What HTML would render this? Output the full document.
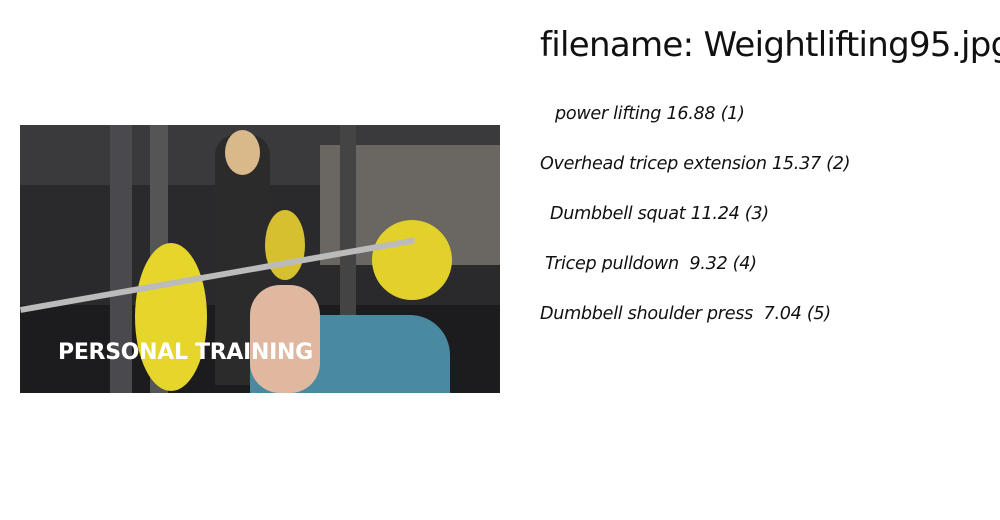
<!DOCTYPE html>
<html><head><style>
body{margin:0;width:1000px;height:520px;background:#fff;overflow:hidden;position:relative;font-family:"DejaVu Sans","Liberation Sans",sans-serif}
.t{position:absolute;left:540px;top:25px;font-size:34px;color:#111;white-space:nowrap;letter-spacing:-0.7px}
.i{position:absolute;font-style:italic;font-size:17.6px;color:#111;white-space:nowrap;letter-spacing:-0.3px}
.p{position:absolute;left:20px;top:125px;width:480px;height:268px;background:#2a2a2c;overflow:hidden}
.p div{position:absolute}
</style></head><body>
<div class="t">filename: Weightlifting95.jpg</div>
<div class="i" style="left:555px;top:104px">power lifting 16.88 (1)</div>
<div class="i" style="left:540px;top:154px">Overhead tricep extension 15.37 (2)</div>
<div class="i" style="left:550px;top:204px">Dumbbell squat 11.24 (3)</div>
<div class="i" style="left:545px;top:254px">Tricep pulldown&nbsp; 9.32 (4)</div>
<div class="i" style="left:540px;top:304px">Dumbbell shoulder press&nbsp; 7.04 (5)</div>
<div class="p">
<div style="left:0;top:0;width:480px;height:60px;background:#3a3a3c"></div>
<div style="left:300px;top:20px;width:180px;height:120px;background:#6a6662"></div>
<div style="left:0;top:180px;width:480px;height:88px;background:#1c1c1e"></div>
<div style="left:90px;top:0;width:22px;height:268px;background:#4a4a4e"></div>
<div style="left:130px;top:0;width:18px;height:268px;background:#555"></div>
<div style="left:320px;top:0;width:16px;height:200px;background:#444"></div>
<div style="left:195px;top:10px;width:55px;height:250px;background:#2b2b2b;border-radius:20px 20px 0 0"></div>
<div style="left:205px;top:5px;width:35px;height:45px;background:#d9b98a;border-radius:50%"></div>
<div style="left:245px;top:85px;width:40px;height:70px;background:#d6c030;border-radius:50%"></div>
<div style="left:352px;top:95px;width:80px;height:80px;background:#e1d12a;border-radius:50%"></div>
<div style="left:115px;top:118px;width:72px;height:148px;background:#e6d52a;border-radius:50%"></div>
<div style="left:0;top:182px;width:400px;height:6px;background:#bbb;transform:rotate(-10deg);transform-origin:0 0"></div>
<div style="left:230px;top:190px;width:200px;height:78px;background:#4a8aa0;border-radius:40px 40px 0 0"></div>
<div style="left:230px;top:160px;width:70px;height:108px;background:#e0b8a0;border-radius:30px"></div>
<div style="left:38px;top:215px;font:bold 22px 'DejaVu Sans',sans-serif;color:#fff;letter-spacing:-0.3px">PERSONAL TRAINING</div>
</div>
</body></html>
